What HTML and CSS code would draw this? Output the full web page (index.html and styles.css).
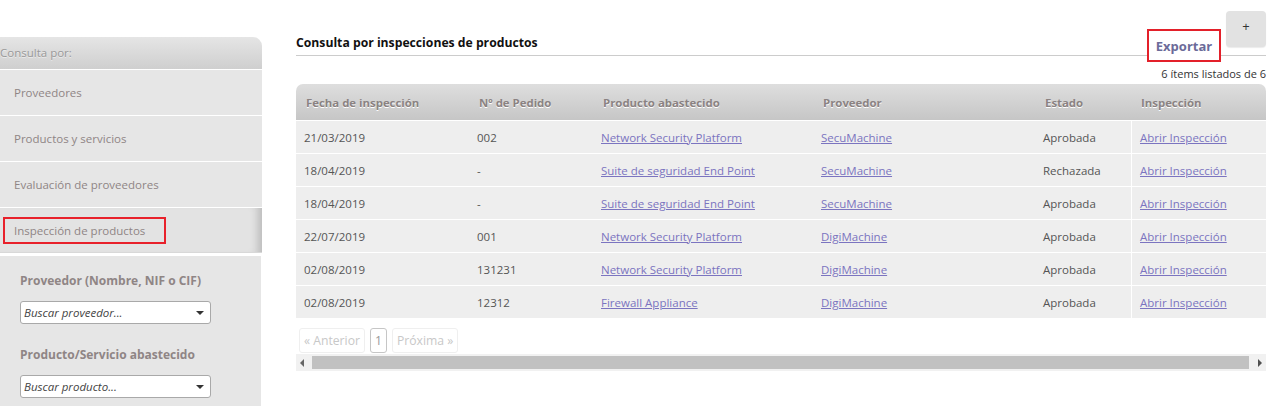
FILE: index.html
```html
<!DOCTYPE html>
<html lang="es">
<head>
<meta charset="utf-8">
<title>Consulta por inspecciones de productos</title>
<link rel="stylesheet" href="styles.css">
</head>
<body>
<div class="page">
  <aside class="sidebar">
    <div class="side-head">Consulta por:</div>
    <nav class="side-nav">
      <a class="side-item">Proveedores</a>
      <a class="side-item">Productos y servicios</a>
      <a class="side-item">Evaluación de proveedores</a>
      <a class="side-item active"><span class="mark">Inspección de productos</span></a>
    </nav>
    <div class="filters">
      <label class="f-label">Proveedor (Nombre, NIF o CIF)</label>
      <div class="select"><span>Buscar proveedor...</span><i class="caret"></i></div>
      <label class="f-label">Producto/Servicio abastecido</label>
      <div class="select"><span>Buscar producto...</span><i class="caret"></i></div>
    </div>
  </aside>

  <main class="main">
    <div class="main-head">
      <h1 class="title">Consulta por inspecciones de productos</h1>
      <a class="export">Exportar</a>
      <button class="plus">+</button>
    </div>
    <div class="count">6 ítems listados de 6</div>

    <table class="grid">
      <colgroup>
        <col class="c1"><col class="c2"><col class="c3"><col class="c4"><col class="c5"><col class="c6">
      </colgroup>
      <thead>
        <tr>
          <th>Fecha de inspección</th>
          <th>Nº de Pedido</th>
          <th>Producto abastecido</th>
          <th>Proveedor</th>
          <th>Estado</th>
          <th>Inspección</th>
        </tr>
      </thead>
      <tbody>
        <tr><td>21/03/2019</td><td>002</td><td><a>Network Security Platform</a></td><td><a>SecuMachine</a></td><td>Aprobada</td><td class="last"><a>Abrir Inspección</a></td></tr>
        <tr><td>18/04/2019</td><td>-</td><td><a>Suite de seguridad End Point</a></td><td><a>SecuMachine</a></td><td>Rechazada</td><td class="last"><a>Abrir Inspección</a></td></tr>
        <tr><td>18/04/2019</td><td>-</td><td><a>Suite de seguridad End Point</a></td><td><a>SecuMachine</a></td><td>Aprobada</td><td class="last"><a>Abrir Inspección</a></td></tr>
        <tr><td>22/07/2019</td><td>001</td><td><a>Network Security Platform</a></td><td><a>DigiMachine</a></td><td>Aprobada</td><td class="last"><a>Abrir Inspección</a></td></tr>
        <tr><td>02/08/2019</td><td>131231</td><td><a>Network Security Platform</a></td><td><a>DigiMachine</a></td><td>Aprobada</td><td class="last"><a>Abrir Inspección</a></td></tr>
        <tr><td>02/08/2019</td><td>12312</td><td><a>Firewall Appliance</a></td><td><a>DigiMachine</a></td><td>Aprobada</td><td class="last"><a>Abrir Inspección</a></td></tr>
      </tbody>
    </table>

    <div class="pager">
      <span class="pg disabled">« Anterior</span>
      <span class="pg current">1</span>
      <span class="pg disabled">Próxima »</span>
    </div>

    <div class="hscroll">
      <span class="arrow left"></span>
      <span class="thumb"></span>
      <span class="arrow right"></span>
    </div>
  </main>
</div>
</body>
</html>
```

FILE: styles.css
```css
* { box-sizing: border-box; }

html, body {
  margin: 0;
  padding: 0;
  background: #ffffff;
}

body {
  font-family: "Open Sans", "Noto Sans", Arial, sans-serif;
  font-size: 11.5px;
  color: #555555;
}

.page {
  display: flex;
  align-items: flex-start;
  width: 1274px;
  height: 406px;
  overflow: hidden;
}

/* ---------- Sidebar ---------- */
.sidebar {
  width: 262px;
  flex: none;
  margin-top: 37px;
}

.side-head {
  height: 32px;
  line-height: 32px;
  padding-left: 0;
  color: #999999;
  font-size: 11.5px;
  background: linear-gradient(#e5e5e5, #cfcfcf);
  border-top-right-radius: 9px;
  text-shadow: 0 1px 0 rgba(255,255,255,0.5);
}

.side-nav {
  display: flex;
  flex-direction: column;
}

.side-item {
  display: flex;
  align-items: center;
  height: 46px;
  padding-left: 14px;
  border-top: 1px solid #ffffff;
  background: #e6e6e6;
  color: #8f8585;
  font-size: 11.5px;
}

.side-item.active {
  background: #e3e3e3;
  box-shadow: inset -10px 0 8px -6px rgba(0,0,0,0.18);
  padding-left: 3px;
  border-bottom: 1px solid #d8d8d8;
}

.mark {
  display: flex;
  align-items: center;
  height: 27px;
  padding: 0 8px 0 9px;
  border: 2px solid #e8212b;
  width: 163px;
  margin-top: 1px;
}

.filters {
  margin-top: 2px;
  border-top: 1px solid #ffffff;
  border-right: 1px solid #ffffff;
  background: #e6e6e6;
  padding: 16px 20px 10px 20px;
  display: flex;
  flex-direction: column;
  height: 170px;
}

.f-label {
  flex: none;
  font-weight: bold;
  color: #8f8585;
  font-size: 12px;
  line-height: 18px;
  margin-bottom: 11px;
}

.select {
  flex: none;
  width: 191px;
  height: 23px;
  background: #ffffff;
  border: 1px solid #a9a9a9;
  border-radius: 3px;
  display: flex;
  align-items: center;
  justify-content: space-between;
  padding: 0 6px 0 3px;
  font-style: italic;
  color: #444444;
  font-size: 11.5px;
  margin-bottom: 22px;
}

.caret {
  width: 0;
  height: 0;
  border-left: 4px solid transparent;
  border-right: 4px solid transparent;
  border-top: 4px solid #333333;
}

/* ---------- Main ---------- */
.main {
  margin-left: 34px;
  width: 970px;
  flex: none;
  padding-top: 11px;
}

.main-head {
  display: flex;
  align-items: flex-end;
  border-bottom: 1px solid #cccccc;
  height: 45px;
}

.title {
  flex: 1;
  margin: 0;
  padding-bottom: 4px;
  font-size: 12.2px;
  font-weight: bold;
  color: #111111;
}

.export {
  position: relative;
  z-index: 1;
  display: flex;
  align-items: center;
  justify-content: center;
  width: 74px;
  height: 33px;
  margin-bottom: -7px;
  border: 2px solid #e3202a;
  background: #ffffff;
  color: #6b6b99;
  font-weight: bold;
  font-size: 13px;
  padding-top: 1px;
}

.plus {
  align-self: flex-start;
  margin-left: 5px;
  width: 40px;
  height: 36px;
  border: none;
  border-radius: 4px;
  background: #e2e2e2;
  color: #333333;
  font-family: inherit;
  font-size: 13px;
  padding: 0 0 6px 0;
  box-shadow: 0 1px 1px rgba(0,0,0,0.08);
}

.count {
  text-align: right;
  font-size: 11px;
  color: #333333;
  margin-top: 10px;
  height: 18px;
  line-height: 15px;
}

/* ---------- Table ---------- */
.grid {
  width: 970px;
  border-collapse: separate;
  border-spacing: 0;
  table-layout: fixed;
}

.c1 { width: 173px; }
.c2 { width: 124px; }
.c3 { width: 220px; }
.c4 { width: 222px; }
.c5 { width: 96px; }
.c6 { width: 135px; }

.grid thead th {
  height: 36px;
  text-align: left;
  padding: 0 0 0 10px;
  font-weight: bold;
  font-size: 11.4px;
  color: #8a8282;
  text-shadow: 0 1px 0 #ffffff;
  background: linear-gradient(#dedede, #c6c6c6);
}

.grid thead th:first-child { border-top-left-radius: 7px; }
.grid thead th:last-child { border-top-right-radius: 7px; }

.grid tbody td {
  height: 33px;
  padding: 0 0 0 8px;
  background: #eeeeee;
  border-top: 1px solid #ffffff;
  color: #555555;
  white-space: nowrap;
}

.grid tbody td.last {
  border-left: 1px solid #ffffff;
}

.grid a {
  color: #7b74c0;
  text-decoration: underline;
}

/* ---------- Pager ---------- */
.pager {
  display: flex;
  gap: 5px;
  padding: 10px 0 0 3px;
  height: 36px;
}

.pg {
  display: flex;
  align-items: center;
  height: 25px;
  padding: 0 4px;
  border: 1px solid #efefef;
  border-radius: 3px;
  color: #c8c8c8;
  font-size: 12.2px;
}

.pg.current {
  border-color: #c6c6c6;
  color: #999999;
  padding: 0 4px;
}

/* ---------- Scrollbar ---------- */
.hscroll {
  display: flex;
  align-items: center;
  height: 17px;
  background: #f1f1f1;
  padding: 0 4px;
}

.thumb {
  flex: 1;
  height: 13px;
  background: #c1c1c1;
  margin: 0 9px 0 8px;
}

.arrow {
  width: 0;
  height: 0;
  border-top: 4px solid transparent;
  border-bottom: 4px solid transparent;
}

.arrow.left { border-right: 4px solid #666666; }
.arrow.right { border-left: 4px solid #505050; }
```
